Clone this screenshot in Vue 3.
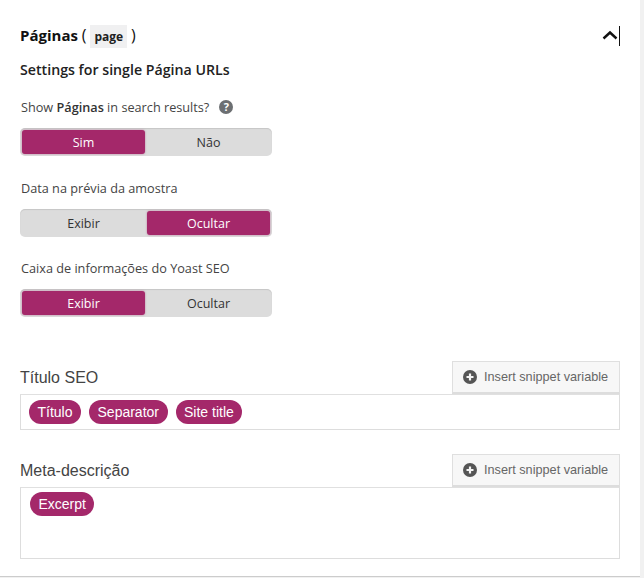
<template>
  <div class="page">
    <main class="card">
      <header class="head">
        <h2 class="title">Páginas <span class="paren">(</span> <code class="slug">page</code> <span class="paren">)</span></h2>
        <button class="collapse" aria-label="Collapse">
          <svg width="16" height="10" viewBox="0 0 16 10" aria-hidden="true"><path d="M1.5 8.5L8 2.5l6.500 6" fill="none" stroke="#111" stroke-width="2.400"/></svg>
        </button>
        <span class="caret"></span>
      </header>
      <h3 class="subtitle">Settings for single Página URLs</h3>

      <section v-for="g in toggles" :key="g.id" class="toggle-group" :class="g.id">
        <div class="toggle-label">
          <span v-if="g.strong">Show <b>Páginas</b> in search results?</span>
          <span v-else>{{ g.label }}</span>
          <span v-if="g.strong" class="help">?</span>
        </div>
        <div class="toggle">
          <button v-for="(o, i) in g.options" :key="o" class="opt" :class="{ on: g.value === i }" @click="g.value = i">{{ o }}</button>
        </div>
      </section>

      <section class="field first">
        <div class="field-head">
          <label class="field-label">Título SEO</label>
          <button class="snippet">
            <svg width="14" height="14" viewBox="0 0 14 14" aria-hidden="true"><circle cx="7" cy="7" r="7" fill="#555"/><path d="M7 3.500v7M3.500 7h7" stroke="#f5f5f5" stroke-width="2.200"/></svg>
            Insert snippet variable
          </button>
        </div>
        <div class="editor">
          <span v-for="t in titleTags" :key="t" class="tag">{{ t }}</span>
        </div>
      </section>

      <section class="field second">
        <div class="field-head">
          <label class="field-label">Meta-descrição</label>
          <button class="snippet">
            <svg width="14" height="14" viewBox="0 0 14 14" aria-hidden="true"><circle cx="7" cy="7" r="7" fill="#555"/><path d="M7 3.500v7M3.500 7h7" stroke="#f5f5f5" stroke-width="2.200"/></svg>
            Insert snippet variable
          </button>
        </div>
        <div class="editor tall">
          <span class="tag">Excerpt</span>
        </div>
      </section>
    </main>
  </div>
</template>

<script setup>
import { reactive } from 'vue'

const toggles = reactive([
  { id: 'g1', strong: true, options: ['Sim', 'Não'], value: 0 },
  { id: 'g2', label: 'Data na prévia da amostra', options: ['Exibir', 'Ocultar'], value: 1 },
  { id: 'g3', label: 'Caixa de informações do Yoast SEO', options: ['Exibir', 'Ocultar'], value: 0 }
])

const titleTags = ['Título', 'Separator', 'Site title']
</script>

<style>
html, body { margin: 0; background: #f1f1f1; }
</style>

<style scoped>
.page { width: 644px; height: 578px; overflow: hidden; background: #f1f1f1; }
.card { width: 640px; height: 577px; box-sizing: border-box; background: #fff; border-bottom: 1px solid #ccc; padding: 24px 20px 0; font-family: "Open Sans", "Noto Sans", sans-serif; color: #333; }

.head { display: flex; align-items: center; height: 23px; }
.title { margin: 0; flex: 1; font-size: 15px; font-weight: 700; color: #111; line-height: 23px; }
.paren { font-weight: 400; font-size: 16px; }
.slug { font-family: "Open Sans", sans-serif; font-size: 12px; font-weight: 700; background: #f0f0f1; padding: 3px 4px; color: #222; }
.collapse { background: none; border: none; padding: 0; display: flex; transform: translateY(-1px); }
.caret { width: 1px; height: 20px; background: #111; margin-left: 1px; }

.subtitle { margin: 11px 0 0; font-size: 14.200px; font-weight: 600; line-height: 23px; color: #222; }

.toggle-group.g1 { margin-top: 16px; }
.toggle-group.g2 { margin-top: 22px; }
.toggle-group.g3 { margin-top: 21px; }
.toggle-label { display: flex; align-items: center; gap: 10px; height: 20px; margin-bottom: 11px; padding-left: 1px; font-size: 12.700px; color: #444; }
.toggle-label b { font-weight: 600; color: #333; }
.help { width: 14px; height: 14px; border-radius: 50%; background: #6c6f72; color: #fff; font-size: 11px; font-weight: 700; line-height: 14px; text-align: center; }

.toggle { display: flex; gap: 2px; width: 252px; height: 28px; box-sizing: border-box; padding: 2px; background: #dcdcdc; border-radius: 5px; box-shadow: inset 0 1px 1px rgba(0,0,0,0.1); }
.opt { flex: 1; border: none; background: transparent; border-radius: 3px; padding: 0; font-family: inherit; font-size: 12.500px; color: #333; cursor: pointer; }
.opt.on { background: #a4286a; color: #fff; box-shadow: 0 0 2px rgba(164,40,106,0.600); }

.field.first { margin-top: 44px; }
.field.second { margin-top: 24px; }
.field-head { display: flex; align-items: center; justify-content: space-between; height: 33px; }
.field-label { font-family: "Liberation Sans", Arial, sans-serif; font-size: 16px; color: #444; }
.snippet { display: flex; align-items: center; gap: 7px; width: 168px; height: 33px; box-sizing: border-box; padding: 0 0 0 10px; background: #f7f7f7; border: 1px solid #dfdfdf; border-bottom: 2px solid #ddd; font-family: "Liberation Sans", Arial, sans-serif; font-size: 12.700px; color: #666; }
.editor { display: flex; align-items: flex-start; gap: 8px; height: 36px; box-sizing: border-box; padding: 5px 8px; background: #fff; border: 1px solid #ddd; border-top-color: #e0e0e0; font-family: "Liberation Sans", Arial, sans-serif; }
.editor.tall { height: 72px; padding: 4px 9px; }
.tag { height: 24px; padding: 0 8.500px; border-radius: 12px; background: #a4286a; color: #fff; font-size: 14px; line-height: 24px; }
</style>
